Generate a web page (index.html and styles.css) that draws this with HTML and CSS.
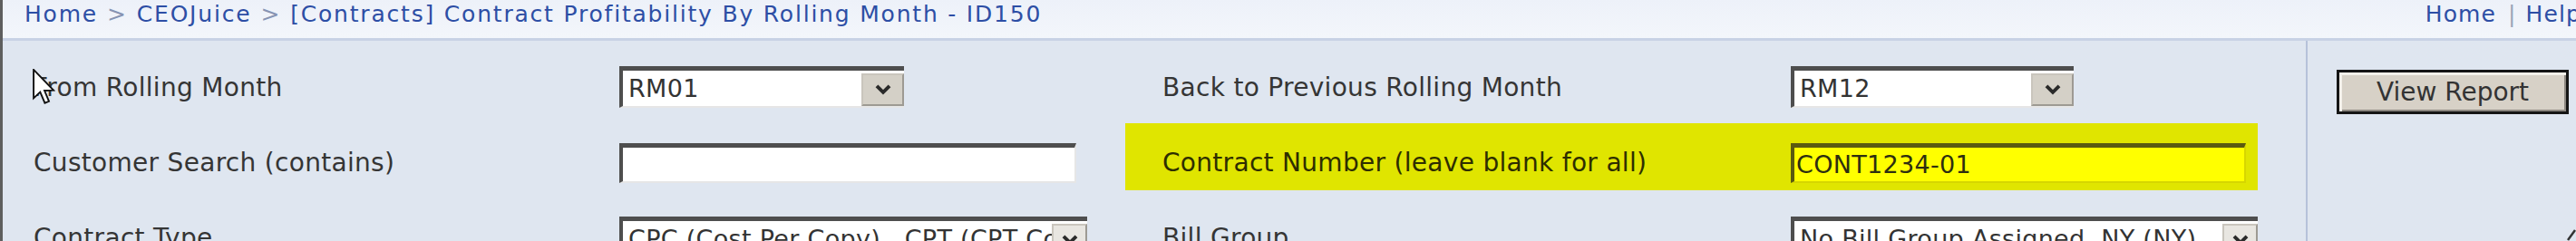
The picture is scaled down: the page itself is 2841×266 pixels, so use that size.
FILE: index.html
```html
<!DOCTYPE html>
<html lang="en">
<head>
<meta charset="utf-8">
<title>Contract Profitability By Rolling Month - ID150</title>
<link rel="stylesheet" href="styles.css">
</head>
<body>
<div class="page">
  <header class="topbar">
    <nav class="crumbs">
      <a class="crumb">Home</a><span class="sep">&gt;</span><a class="crumb">CEOJuice</a><span class="sep">&gt;</span><span class="crumb">[Contracts] Contract Profitability By Rolling Month - ID150</span>
    </nav>
    <nav class="links">
      <a class="link">Home</a><span class="bar">|</span><a class="link">Help</a>
    </nav>
  </header>
  <main class="main">
    <section class="form">
      <div class="cell lab1">From Rolling Month</div>
      <div class="cell">
        <div class="dd w314"><span class="dd-text">RM01</span><span class="dd-btn"><svg viewBox="0 0 14 10" class="chev"><polyline points="2,2 7,7 12,2"/></svg></span></div>
      </div>
      <div class="cell lab2">Back to Previous Rolling Month</div>
      <div class="cell">
        <div class="dd w312"><span class="dd-text">RM12</span><span class="dd-btn"><svg viewBox="0 0 14 10" class="chev"><polyline points="2,2 7,7 12,2"/></svg></span></div>
      </div>

      <div class="cell lab1">Customer Search (contains)</div>
      <div class="cell"><div class="txt w504"></div></div>
      <div class="cell lab2 hl">Contract Number (leave blank for all)</div>
      <div class="cell hl"><div class="txt txt-hl w502">CONT1234-01</div></div>

      <div class="cell lab1">Contract Type</div>
      <div class="cell">
        <div class="dd w516"><span class="dd-text">CPC (Cost Per Copy) , CPT (CPT Contract)</span><span class="dd-btn small"><svg viewBox="0 0 14 10" class="chev"><polyline points="2,2 7,7 12,2"/></svg></span></div>
      </div>
      <div class="cell lab2">Bill Group</div>
      <div class="cell">
        <div class="dd w515"><span class="dd-text">No Bill Group Assigned, NY (NY)</span><span class="dd-btn small"><svg viewBox="0 0 14 10" class="chev"><polyline points="2,2 7,7 12,2"/></svg></span></div>
      </div>
    </section>
    <aside class="actions">
      <button class="btn" type="button">View Report</button>
    </aside>
  </main>
  <svg class="cursor" viewBox="0 0 13 21"><path d="M0.5,0.5 L0.5,17 L4.3,13.4 L7,19.8 L9.4,18.8 L6.8,12.6 L12,12.4 Z"/></svg>
  <svg class="grip" viewBox="0 0 10 16"><line x1="1" y1="15" x2="9" y2="4"/></svg>
</div>
</body>
</html>
```

FILE: styles.css
```css
html, body {
  margin: 0;
  padding: 0;
}
body {
  width: 2841px;
  height: 266px;
  overflow: hidden;
  background: #dfe6f0;
  font-family: "DejaVu Sans", Verdana, sans-serif;
}
.page {
  position: relative;
  height: 266px;
  border-left: 3px solid #5e5e5e;
  box-sizing: border-box;
  overflow: hidden;
}
.topbar {
  height: 42px;
  display: flex;
  justify-content: space-between;
  align-items: flex-start;
  background: linear-gradient(#edf1f9, #f3f6fb);
  border-bottom: 3px solid #c8d2e5;
  font-size: 25px;
  line-height: 31px;
  white-space: nowrap;
}
.crumbs {
  padding-left: 24px;
  color: #2d4ea5;
  letter-spacing: 1.8px;
}
.crumb {
  color: #2d4ea5;
}
.sep {
  color: #8794b3;
  margin: 0 10px;
}
.links {
  color: #2d4ea5;
  letter-spacing: 1.1px;
  margin-right: -6px;
}
.link {
  color: #2d4ea5;
}
.bar {
  color: #9aa4b8;
  margin: 0 10px 0 13px;
}
.main {
  display: flex;
  height: 221px;
}
.form {
  width: 2540px;
  flex: none;
  display: grid;
  grid-template-columns: 680px 558px 734px 515px;
  grid-auto-rows: 74px;
  row-gap: 9px;
  padding-top: 8px;
  box-sizing: border-box;
  align-content: start;
}
.cell {
  display: flex;
  align-items: center;
  padding-top: 13px;
  box-sizing: border-box;
  min-width: 0;
}
.lab1, .lab2 {
  font-size: 28px;
  letter-spacing: 0.3px;
  color: #353535;
  white-space: nowrap;
}
.lab1 {
  padding-left: 34px;
}
.lab2 {
  padding-left: 41px;
}
.hl {
  background: #e0e500;
}
.hl.lab2 {
  color: #2e2e00;
}
.dd {
  display: flex;
  align-items: flex-end;
  height: 46px;
  box-sizing: border-box;
  border-top: 5px solid #4e4e4e;
  border-left: 4px solid #4e4e4e;
  border-bottom: 2px solid #e6e6e6;
  background: #fff;
  flex: none;
  margin-top: -2px;
}
.dd-text {
  flex: 1;
  min-width: 0;
  align-self: center;
  padding-left: 6px;
  font-size: 27px;
  letter-spacing: 0.3px;
  color: #333;
  white-space: nowrap;
  overflow: hidden;
}
.dd-btn {
  flex: none;
  width: 47px;
  height: 36px;
  box-sizing: border-box;
  background: #d4d0c7;
  border: 2px solid #9d9a93;
  border-top-color: #c9c5bd;
  border-left-color: #c9c5bd;
  display: flex;
  align-items: center;
  justify-content: center;
}
.dd-btn.small {
  width: 39px;
  background: #e8e6e1;
}
.chev {
  width: 20px;
  height: 14px;
}
.chev polyline {
  fill: none;
  stroke: #2a2a2a;
  stroke-width: 2.8;
}
.w314 { width: 314px; }
.w312 { width: 312px; }
.w516 { width: 516px; }
.w515 { width: 515px; }
.w504 { width: 504px; }
.w502 { width: 502px; }
.txt {
  height: 44px;
  box-sizing: border-box;
  border-top: 5px solid #4e4e4e;
  border-left: 4px solid #4e4e4e;
  border-bottom: 2px solid #e6e6e6;
  border-right: 2px solid #e6e6e6;
  background: #fff;
  font-size: 27px;
  letter-spacing: 0.3px;
  line-height: 37px;
  padding-left: 2px;
  color: #333;
  flex: none;
}
.txt-hl {
  background: #ffff00;
  border-top-color: #5a5a10;
  border-left-color: #5a5a10;
  border-bottom-color: #d6d600;
  border-right-color: #d6d600;
  color: #2e2e10;
}
.actions {
  flex: 1;
  border-left: 2px solid #b6c2da;
  padding: 32px 0 0 32px;
  box-sizing: border-box;
}
.btn {
  width: 256px;
  height: 49px;
  margin: 0;
  padding: 0;
  border: 3px solid #151515;
  background: #d7d1c7;
  box-shadow: inset 3px 3px 0 #f3f0ea, inset -2px -2px 0 #8c8780;
  font-family: "DejaVu Sans", Verdana, sans-serif;
  font-size: 28px;
  color: #333;
}
.cursor {
  position: absolute;
  left: 33px;
  top: 76px;
  width: 25px;
  height: 40px;
}
.cursor path {
  fill: #fff;
  stroke: #111;
  stroke-width: 1;
  stroke-linejoin: miter;
}
.grip {
  position: absolute;
  right: 0;
  bottom: 0;
  width: 10px;
  height: 16px;
}
.grip line {
  stroke: #333;
  stroke-width: 2.5;
}
```
